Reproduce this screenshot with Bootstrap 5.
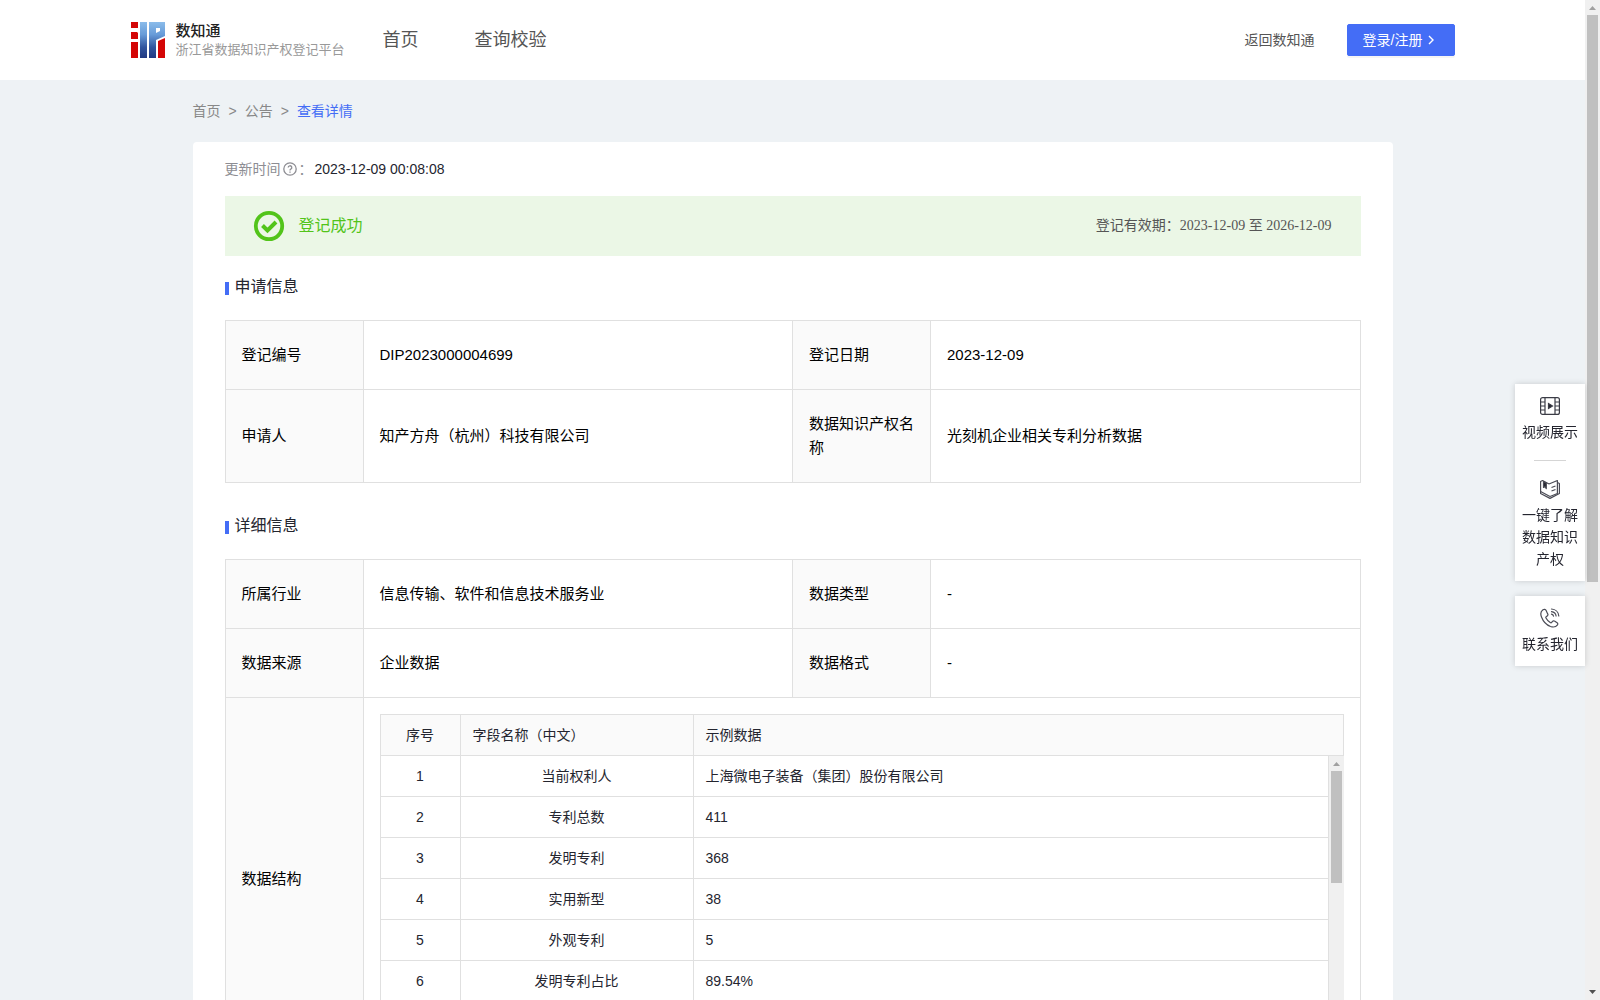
<!DOCTYPE html>
<html lang="zh-CN">
<head>
<meta charset="utf-8">
<meta name="viewport" content="width=device-width, initial-scale=1">
<title>查看详情 - 浙江省数据知识产权登记平台</title>
<link rel="stylesheet" href="https://cdn.jsdelivr.net/npm/bootstrap@5.3.0/dist/css/bootstrap.min.css">
<style>
:root { --brand: #446df6; --ink: #24252f; --line: #e0e0e0; }
body { font-family: "Liberation Sans", "Noto Sans CJK SC", sans-serif; font-size: 14px; line-height: 22px; color: var(--ink); background: #eef2f5; }
a { text-decoration: none; color: inherit; }
.page-frame { height: 100vh; }
.page-scroll, .rows-scroll { overflow-x: hidden; overflow-y: auto; min-width: 0; scrollbar-width: none; }
.page-scroll::-webkit-scrollbar, .rows-scroll::-webkit-scrollbar { display: none; }
/* always-visible scroll rails */
.rail { width: 15px; background: #f0f0f0; }
.rail svg { display: block; }
.rail-track { padding: 0 2px; }
.rail-thumb { background: #c0c0c0; }

.site-bar { height: 80px; background: #fff; padding: 0; }
.site-wrap { max-width: 1324px; }
.brand-name { font-size: 15px; font-weight: 500; line-height: 20px; color: #222; }
.brand-sub { font-size: 13px; line-height: 18px; color: #999; }
.brand-gap { gap: 10px; }
.main-nav { margin-left: 38px; gap: 56px; font-size: 18px; color: #555; }
.back-link { color: #555; }
.btn-login { --bs-btn-color: #fff; --bs-btn-bg: var(--brand); --bs-btn-border-color: var(--brand); --bs-btn-hover-color: #fff; --bs-btn-hover-bg: #345de6; width: 108px; height: 32px; padding: 0 15px; border-radius: 2px; font-size: 14px; box-shadow: 0 2px 0 rgba(0,0,0,.04); }

.content-wrap { max-width: 1200px; min-height: 1628px; }
.crumbs { --bs-breadcrumb-divider: ">"; --bs-breadcrumb-item-padding-x: 8px; --bs-breadcrumb-divider-color: #888; padding: 20px 0; color: #888; font-size: 14px; margin: 0; }
.crumbs .active { color: var(--brand); }
.sheet { background: #fff; border-radius: 4px; min-height: 1500px; padding: 16px 32px; }
.muted-label { color: #8d8d93; }
.help-icon { margin: 0 2px; }
.time-value { margin-left: 2px; }
.status-strip { height: 60px; background: #ebf7e6; padding: 0 29px 0 28px; margin-top: 16px; }
.status-gap { gap: 14px; }
.status-text { font-size: 16px; color: #52c41a; }
.valid-text { font-family: "Liberation Serif", "Noto Sans CJK SC", serif; color: #555; }
.sec-title { font-size: 16px; line-height: 24px; font-weight: 400; margin: 19px 0 21px; gap: 6px; }
.sec-title::before { content: ""; width: 4px; height: 13px; background: var(--brand); margin-top: 3px; }
.sec-next { margin-top: 31px; }
.info-table { table-layout: fixed; margin: 0; font-size: 15px; line-height: 24px; color: #000; --bs-table-color: #000; border-color: var(--line); }
.info-table > tbody > tr > * { padding: 16px; height: 69px; vertical-align: middle; font-weight: 400; }
.info-table > tbody > tr > th { background: #fafafa; }
.info-table > tbody > .tall-row > * { height: 93px; }
.data-grid { font-size: 14px; line-height: 22px; color: var(--ink); }
.data-grid table { table-layout: fixed; margin: 0; border-color: var(--line); --bs-table-color: var(--ink); }
.data-grid tr > * { padding: 9px 12px; height: 41px; font-weight: 400; }
.data-grid thead th { background: #fafafa; }
.rows-frame { height: 288px; }
.rows-scroll table, .rows-scroll tbody > tr:first-child, .rows-scroll tr:first-child > * { border-top: 0; }
.rows-scroll tr:first-child > * { padding-bottom: 8px; height: 40px; }

.side-dock { position: fixed; right: 15px; top: 384px; width: 70px; gap: 15px; }
.dock-box { background: #fff; box-shadow: 0 0 6px rgba(0,0,0,.16); padding: 12px 6px 11px; text-align: center; }
.dock-box a { line-height: 22px; gap: 5px; }
.dock-rule { width: 32px; border-top: 1px solid #d5d5d5; margin: 17px auto 18px; opacity: 1; }
</style>
<script src="https://cdn.jsdelivr.net/npm/bootstrap@5.3.0/dist/js/bootstrap.bundle.min.js" defer></script>
</head>
<body>
<div class="page-frame d-flex">
<div class="page-scroll flex-grow-1">
  <header class="navbar site-bar">
    <div class="container-fluid site-wrap p-0 flex-nowrap justify-content-start">
      <a href="#" class="d-flex align-items-center brand-gap text-nowrap">
        <svg width="35" height="36" viewBox="0 0 35 36" aria-hidden="true">
          <defs><linearGradient id="lg" gradientUnits="userSpaceOnUse" x1="0" y1="0" x2="0" y2="36"><stop offset="0" stop-color="#8bbcea"/><stop offset=".35" stop-color="#679bd8"/><stop offset=".7" stop-color="#31559e"/><stop offset="1" stop-color="#213a83"/></linearGradient></defs>
          <path d="M0 0h7v6H0zM0 10h6l1 1v6H0zM0 20h7v16H0zM27 19 34 16v20h-7z" fill="#d40606"/>
          <path d="M9 0h7v36H9z" fill="url(#lg)"/>
          <path d="M18 0h16v14l-9 4v18h-7zM25 6v5l4-2V6z" fill="url(#lg)" fill-rule="evenodd"/>
        </svg>
        <span class="d-flex flex-column"><span class="brand-name">数知通</span><span class="brand-sub">浙江省数据知识产权登记平台</span></span>
      </a>
      <nav class="d-flex main-nav text-nowrap"><a href="#">首页</a><a href="#">查询校验</a></nav>
      <div class="d-flex align-items-center ms-auto text-nowrap">
        <a href="#" class="back-link me-3 pe-3">返回数知通</a>
        <button type="button" class="btn btn-login d-flex align-items-center gap-1 text-nowrap">登录/注册
          <svg width="10" height="10" viewBox="0 0 10 10" fill="none" stroke="currentColor" stroke-width="1.400" aria-hidden="true"><path d="M3 1l4 4-4 4"/></svg>
        </button>
      </div>
    </div>
  </header>

  <main class="container-fluid content-wrap p-0">
    <nav aria-label="breadcrumb">
      <ol class="breadcrumb crumbs">
        <li class="breadcrumb-item"><a href="#">首页</a></li>
        <li class="breadcrumb-item"><a href="#">公告</a></li>
        <li class="breadcrumb-item active" aria-current="page">查看详情</li>
      </ol>
    </nav>

    <section class="sheet">
      <div class="d-flex align-items-center">
        <span class="muted-label">更新时间</span>
        <svg class="muted-label help-icon" width="14" height="14" viewBox="0 0 14 14" fill="none" stroke="currentColor" stroke-width="1.300" aria-hidden="true"><circle cx="7" cy="7" r="6.200"/><path d="M5.200 5.600a1.800 1.800 0 1 1 2.600 1.600c-.6.300-.8.600-.8 1.300"/><path d="M7 9.600v1.200"/></svg>
        <span class="muted-label">：</span>
        <span class="time-value">2023-12-09 00:08:08</span>
      </div>
      <div class="status-strip d-flex align-items-center justify-content-between">
        <div class="d-flex align-items-center status-gap">
          <svg width="32" height="32" viewBox="0 0 32 32" fill="none" stroke="#52c41a" aria-hidden="true"><circle cx="16" cy="16" r="13.200" stroke-width="3.800"/><path d="M9.500 15.500l5 5 8.500-8.500" stroke-width="4"/></svg>
          <span class="status-text">登记成功</span>
        </div>
        <div class="valid-text">登记有效期：2023-12-09 至 2026-12-09</div>
      </div>

      <h2 class="sec-title d-flex align-items-center">申请信息</h2>
      <table class="table table-bordered info-table">
        <colgroup><col style="width:138px"><col><col style="width:138px"><col></colgroup>
        <tbody>
          <tr><th scope="row">登记编号</th><td>DIP2023000004699</td><th scope="row">登记日期</th><td>2023-12-09</td></tr>
          <tr class="tall-row"><th scope="row">申请人</th><td>知产方舟（杭州）科技有限公司</td><th scope="row">数据知识产权名称</th><td>光刻机企业相关专利分析数据</td></tr>
        </tbody>
      </table>

      <h2 class="sec-title sec-next d-flex align-items-center">详细信息</h2>
      <table class="table table-bordered info-table">
        <colgroup><col style="width:138px"><col><col style="width:138px"><col></colgroup>
        <tbody>
          <tr><th scope="row">所属行业</th><td>信息传输、软件和信息技术服务业</td><th scope="row">数据类型</th><td>-</td></tr>
          <tr><th scope="row">数据来源</th><td>企业数据</td><th scope="row">数据格式</th><td>-</td></tr>
          <tr><th scope="row">数据结构</th><td colspan="3">
            <div class="data-grid">
              <table class="table table-bordered">
                <colgroup><col style="width:80px"><col style="width:233px"><col></colgroup>
                <thead><tr><th scope="col" class="text-center">序号</th><th scope="col">字段名称（中文）</th><th scope="col">示例数据</th></tr></thead>
              </table>
              <div class="rows-frame d-flex">
              <div class="rows-scroll flex-grow-1">
                <table class="table table-bordered">
                  <colgroup><col style="width:80px"><col style="width:233px"><col></colgroup>
                  <tbody>
                    <tr><td class="text-center">1</td><td class="text-center">当前权利人</td><td>上海微电子装备（集团）股份有限公司</td></tr>
                    <tr><td class="text-center">2</td><td class="text-center">专利总数</td><td>411</td></tr>
                    <tr><td class="text-center">3</td><td class="text-center">发明专利</td><td>368</td></tr>
                    <tr><td class="text-center">4</td><td class="text-center">实用新型</td><td>38</td></tr>
                    <tr><td class="text-center">5</td><td class="text-center">外观专利</td><td>5</td></tr>
                    <tr><td class="text-center">6</td><td class="text-center">发明专利占比</td><td>89.54%</td></tr>
                    <tr><td></td><td></td><td></td></tr>
                  </tbody>
                </table>
              </div>
              <div class="rail flex-shrink-0 d-flex flex-column" aria-hidden="true">
                <svg width="15" height="15" viewBox="0 0 15 15"><path d="M4 10 7.500 6 11 10z" fill="#a0a0a0"/></svg>
                <div class="rail-track flex-grow-1"><div class="rail-thumb" style="height:43.500%"></div></div>
                <svg width="15" height="15" viewBox="0 0 15 15"><path d="M4 6 7.500 10 11 6z" fill="#505050"/></svg>
              </div>
              </div>
            </div>
          </td></tr>
        </tbody>
      </table>
    </section>
  </main>

  <aside class="side-dock d-flex flex-column">
    <div class="dock-box">
      <a href="#" class="d-flex flex-column align-items-center">
        <svg width="20" height="20" viewBox="0 0 20 20" fill="none" stroke="#3b3c46" stroke-width="1.200" aria-hidden="true"><rect x=".6" y="1.600" width="18.800" height="16.800" rx="2"/><path d="M5 1.600v16.800M15 1.600v16.800M.6 6H5M.6 10H5M.6 14H5M15 6h4.400M15 10h4.400M15 14h4.400"/><path d="M8.500 7.500v5l4-2.500z" fill="#24252f"/></svg>
        视频展示</a>
      <hr class="dock-rule">
      <a href="#" class="d-flex flex-column align-items-center">
        <svg width="20" height="20" viewBox="0 0 20 20" fill="none" stroke="#4a4b55" stroke-width="1.200" stroke-linejoin="round" aria-hidden="true"><path d="M9 5 2.500 1.500.6 2.500v12l9.400 4.900 9.400-4.900v-10l-2-1"/><path d="M9 5l8.400-3.500v13L10 17.500M.6 12.500 10 17.500M11.500 8.500 15.500 7M11.500 12l4-1.500"/><path d="M3.500 2.500v6l1.300-.8 1.500 1.800V4z" fill="#24252f"/></svg>
        一键了解数据知识产权</a>
    </div>
    <div class="dock-box">
      <a href="#" class="d-flex flex-column align-items-center">
        <svg width="20" height="20" viewBox="0 0 20 20" fill="none" stroke="#4a4b55" stroke-width="1.200" stroke-linecap="round" stroke-linejoin="round" aria-hidden="true"><path d="M3 1.800C.8 3.300.3 6 1.500 9c1.500 4 5 8 9 9.500 3 1 5.500.5 7-1.700.5-.8.300-1.500-.4-2l-2.600-1.700c-.7-.5-1.500-.3-2 .3l-.8 1c-.4.500-1 .5-1.500.2-1.700-1-3.200-2.700-4.200-4.600-.3-.5-.2-1 .3-1.400l1-.7c.7-.5.800-1.300.4-2L6 2.300c-.5-1-1.800-1.300-3-.5z"/><path d="M11.500 1c4 .3 7 3.200 7.300 7M11.500 3.700c2.500.3 4.300 2 4.600 4.300M11.500 6.200c1.100.2 1.800.9 2 1.900"/></svg>
        联系我们</a>
    </div>
  </aside>
</div>
<div class="rail flex-shrink-0 d-flex flex-column" aria-hidden="true">
  <svg width="15" height="15" viewBox="0 0 15 15"><path d="M4 10 7.500 6 11 10z" fill="#a0a0a0"/></svg>
  <div class="rail-track flex-grow-1"><div class="rail-thumb" style="height:58.500%"></div></div>
  <svg width="15" height="15" viewBox="0 0 15 15"><path d="M4 5 7.500 9 11 5z" fill="#505050"/></svg>
</div>
</div>
</body>
</html>
